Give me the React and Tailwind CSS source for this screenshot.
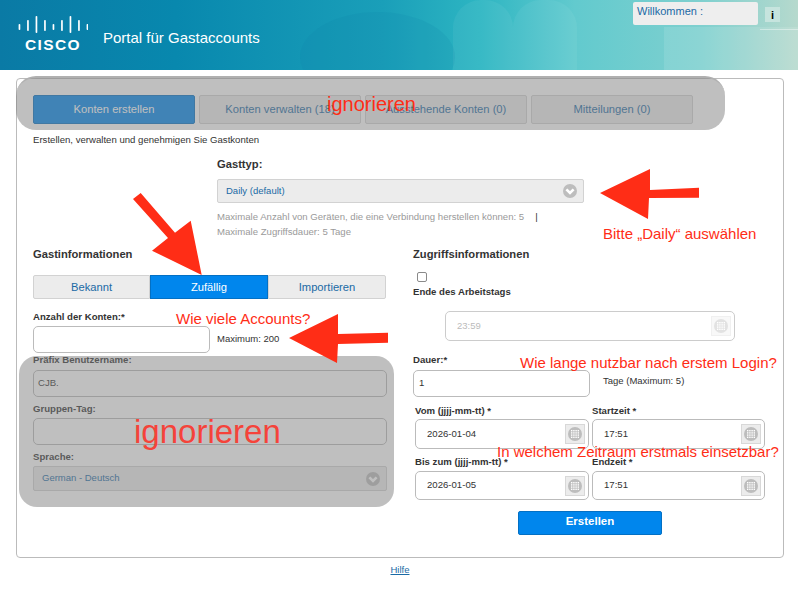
import React from 'react'

const FONT = { fontFamily: '"Liberation Sans", Arial, sans-serif' }

const Chevron = ({ fill = '#bdbdbd' }) => (
  <svg width="14" height="14" viewBox="0 0 14 14">
    <circle cx="7" cy="7" r="7" fill={fill} />
    <path d="M3.4 5.4 7 9l3.6-3.6" fill="none" stroke="#fff" strokeWidth="2.6" />
  </svg>
)

const GridIcon = ({ muted = false }) => (
  <span className={`flex w-[20px] h-[20px] items-center justify-center border ${muted ? 'border-[#f0f0f0] bg-[#f8f8f8]' : 'border-[#d8d8d8] bg-[#ececec]'}`}>
    <svg width="14" height="14" viewBox="0 0 14 14">
      <circle cx="7" cy="7" r="7" fill={muted ? '#e2e2e2' : '#bdbdbd'} />
      {[3.7, 5.9, 8.1, 10.3].map((y) =>
        [3.7, 5.9, 8.1, 10.3].map((x) => <rect key={`${x}-${y}`} x={x - 0.7} y={y - 0.7} width="1.4" height="1.4" fill="#fff" />)
      )}
    </svg>
  </span>
)

// short, medium, tall, medium, short, medium, tall, medium, short
const BARS = [[8, 6], [4, 11], [0, 17], [4, 11], [8, 6], [4, 11], [0, 17], [4, 11], [8, 6]]

const CiscoBars = () => (
  <svg width="70" height="19" viewBox="0 0 70 19" fill="#fff">
    {BARS.map(([y, h], i) => (
      <rect key={i} x={0.6 + i * 8.5} y={y + 1} width="1.7" height={h} rx="0.8" />
    ))}
  </svg>
)

const Label = ({ children, className = '' }) => (
  <div className={`text-[9.6px] leading-3 font-bold text-[#333] ${className}`}>{children}</div>
)

const TextField = ({ value, className = '', icon = false }) => (
  <div className={`flex items-center justify-between rounded-[5px] border border-[#bbb] bg-white text-[9.6px] text-[#333] ${className}`}>
    <span>{value}</span>
    {icon && <GridIcon />}
  </div>
)

const SelectBox = ({ value, className = '' }) => (
  <div className={`flex items-center justify-between rounded-[2px] border border-[#d2d2d2] bg-[#ececec] pl-[8px] pr-[6px] text-[9.5px] text-[#1a6aa5] ${className}`}>
    <span>{value}</span>
    <Chevron />
  </div>
)

export default function App() {
  return (
    <div className="relative w-[798px] h-[599px] overflow-hidden bg-white" style={FONT}>
      {/* Header */}
      <header className="relative h-[70px] overflow-hidden bg-[linear-gradient(90deg,#0a7aa5_0%,#0888ae_22%,#1a9fb9_48%,#2db5c2_60%,#62cace_72%,#7fd0cf_88%,#b6d9cd_100%)]">
        <div className="absolute left-[300px] top-[12px] w-[155px] h-[90px] rounded-[50%] bg-[#0f7fa8]/15" />
        <div className="absolute left-[453px] top-0 w-[60px] h-[80px] rounded-t-[28px] bg-white/5" />
        <div className="absolute left-[513px] top-0 w-[64px] h-[80px] rounded-t-[28px] bg-white/5" />
        <div className="absolute left-[664px] top-[27px] w-[134px] h-[43px] bg-white/10" />
        <div className="absolute left-[760px] top-[29px] w-[38px] h-px bg-white/40" />
        <div className="flex items-center h-full pl-[18px]">
          <div className="flex flex-col items-center w-[70px] -mt-[3px]">
            <CiscoBars />
            <span className="text-[15.5px] leading-[15px] font-bold tracking-[1.4px] text-white mt-[3px]">CISCO</span>
          </div>
          <span className="ml-[15px] mt-[6px] text-[15px] text-white">Portal für Gastaccounts</span>
        </div>
        <div className="absolute right-[40px] top-[2px] flex w-[125px] h-[23px] items-start rounded-[2px] bg-[#eeeeee] pl-1 pt-[3px] text-[11px] leading-3 text-[#1a6aa5]">
          Willkommen :
        </div>
        <div className="absolute left-[765px] top-[7px] flex w-[15px] h-[15px] items-center justify-center bg-[#c6e4de]">
          <span className="text-[11px] leading-3 font-bold text-black">i</span>
        </div>
      </header>

      {/* Main card */}
      <main className="ml-[16px] mt-[8px] w-[768px] h-[480px] rounded-[4px] border border-[#bbb] pl-[16px] pt-[16px]">
        <nav className="flex gap-[4px] text-[11.2px]">
          <div className="flex w-[162px] h-[29px] items-center justify-center rounded-[2px] border border-[#0370c4] bg-[#0086ed] text-white">Konten erstellen</div>
          <div className="flex w-[162px] h-[29px] items-center justify-center rounded-[2px] border border-[#d2d2d2] bg-[#ececec] text-[#1a6aa5]">Konten verwalten (18)</div>
          <div className="flex w-[162px] h-[29px] items-center justify-center rounded-[2px] border border-[#d2d2d2] bg-[#ececec] text-[#1a6aa5]">Ausstehende Konten (0)</div>
          <div className="flex w-[162px] h-[29px] items-center justify-center rounded-[2px] border border-[#d2d2d2] bg-[#ececec] text-[#1a6aa5]">Mitteilungen (0)</div>
        </nav>
        <p className="mt-[10px] text-[9.6px] leading-3 text-[#333]">Erstellen, verwalten und genehmigen Sie Gastkonten</p>

        {/* Gasttyp */}
        <section className="ml-[184px] mt-[12px] w-[367px]">
          <div className="text-[11.2px] leading-3 font-bold text-[#333]">Gasttyp:</div>
          <SelectBox value="Daily (default)" className="mt-[9px] h-[24px]" />
          <div className="mt-[6px] text-[9.6px] leading-[15px] text-[#9a9a9a]">
            <div className="flex">Maximale Anzahl von Geräten, die eine Verbindung herstellen können: 5<span className="ml-[11px] text-[#333]">|</span></div>
            <div>Maximale Zugriffsdauer: 5 Tage</div>
          </div>
        </section>

        <div className="mt-[9px] flex">
          {/* Gastinformationen */}
          <section className="w-[354px]">
            <div className="text-[11.2px] leading-3 font-bold text-[#333]">Gastinformationen</div>
            <div className="mt-[15px] flex h-[24px] text-[11.2px]">
              <div className="flex w-[117px] items-center justify-center rounded-l-[2px] border border-[#d2d2d2] bg-[#ececec] text-[#1a6aa5]">Bekannt</div>
              <div className="flex w-[118px] items-center justify-center border border-[#0370c4] bg-[#0086ed] text-white">Zufällig</div>
              <div className="flex w-[118px] items-center justify-center rounded-r-[2px] border border-[#d2d2d2] bg-[#ececec] text-[#1a6aa5]">Importieren</div>
            </div>
            <Label className="mt-[12px]">Anzahl der Konten:*</Label>
            <div className="mt-[3px] flex items-center">
              <TextField className="w-[177px] h-[27px]" />
              <span className="ml-[7px] text-[9.5px] text-[#333]">Maximum: 200</span>
            </div>
            <Label className="mt-[1px]">Präfix Benutzername:</Label>
            <TextField value="CJB." className="mt-[4px] h-[27px] pl-[4px]" />
            <Label className="mt-[6px]">Gruppen-Tag:</Label>
            <TextField className="mt-[3px] h-[27px]" />
            <Label className="mt-[6px]">Sprache:</Label>
            <SelectBox value="German - Deutsch" className="mt-[3px] h-[25px]" />
          </section>

          {/* Zugriffsinformationen */}
          <section className="ml-[26px] w-[353px]">
            <div className="text-[11.2px] leading-3 font-bold text-[#333]">Zugriffsinformationen</div>
            <div className="mt-[12px] ml-[4px] w-[10px] h-[10px] rounded-[2px] border border-[#8a8a8a] bg-white" />
            <Label className="mt-[4px]">Ende des Arbeitstags</Label>
            <div className="ml-[32px] mt-[13px] flex w-[290px] h-[30px] items-center justify-between rounded-[5px] border border-[#ccc] pl-[11px] pr-[3px] text-[9.5px] text-[#bbb]">
              <span>23:59</span>
              <GridIcon muted />
            </div>
            <Label className="mt-[13px]">Dauer:*</Label>
            <div className="mt-[4px] flex items-start">
              <TextField value="1" className="w-[177px] h-[27px] pl-[5px]" />
              <span className="ml-[13px] mt-[1px] text-[9.5px] leading-[20px] text-[#333]">Tage (Maximum: 5)</span>
            </div>
            <div className="mt-[8px] ml-[2px] grid grid-cols-[174px_173px] gap-x-[3px]">
              <Label>Vom (jjjj-mm-tt) *</Label>
              <Label>Startzeit *</Label>
              <TextField value="2026-01-04" icon className="mt-[2px] h-[30px] pl-[11px] pr-[3px]" />
              <TextField value="17:51" icon className="mt-[2px] h-[30px] pl-[11px] pr-[3px]" />
              <Label className="mt-[7px]">Bis zum (jjjj-mm-tt) *</Label>
              <Label className="mt-[7px]">Endzeit *</Label>
              <TextField value="2026-01-05" icon className="mt-[3px] h-[29px] pl-[11px] pr-[3px]" />
              <TextField value="17:51" icon className="mt-[3px] h-[29px] pl-[11px] pr-[3px]" />
            </div>
            <div className="mt-[11px] ml-[105px] flex w-[144px] h-[24px] items-center justify-center rounded-[2px] border border-[#0370c4] bg-[#0086ed] pb-[3px] text-[11.5px] font-bold text-white">Erstellen</div>
          </section>
        </div>
      </main>

      <footer className="mt-[6px] pl-[2px] text-center text-[9.5px] leading-3 text-[#1a6aa5] underline">Hilfe</footer>

      {/* Annotations drawn over the screenshot */}
      <div className="absolute left-[16px] top-[76px] w-[709px] h-[54px] rounded-[20px] border-t-2 border-[#b0b0b0] bg-[#7f7f7f]/50" />
      <div className="absolute left-[19px] top-[356px] w-[375px] h-[151px] rounded-[18px] bg-[#7f7f7f]/50" />

      <svg className="absolute left-0 top-0" width="798" height="599" fill="#ff2d16">
        <path d="M600 193 650 169V190L699 187.7V197.7L649 198 648 219Z" />
        <path d="M201.7 275 152 250.7 168 238 133 199 140.7 193 175 232.7 190.7 220.7Z" />
        <path d="M289 338 338 314V334L388 332.7V342.7L338 344 337 363Z" />
      </svg>

      <span className="absolute left-[327px] top-[92px] text-[20px] leading-6 text-[#ff2d16]">ignorieren</span>
      <span className="absolute left-[134px] top-[412px] text-[33px] leading-10 text-[#f5433a]">ignorieren</span>
      <span className="absolute left-[176px] top-[309px] text-[15px] leading-5 text-[#ff2d16]">Wie viele Accounts?</span>
      <span className="absolute left-[603px] top-[224px] text-[15px] leading-5 text-[#ff2d16]">Bitte „Daily“ auswählen</span>
      <span className="absolute left-[520px] top-[353px] text-[15px] leading-5 text-[#ff2d16]">Wie lange nutzbar nach erstem Login?</span>
      <span className="absolute left-[497px] top-[442px] text-[15px] leading-5 text-[#ff2d16]">In welchem Zeitraum erstmals einsetzbar?</span>
    </div>
  )
}
